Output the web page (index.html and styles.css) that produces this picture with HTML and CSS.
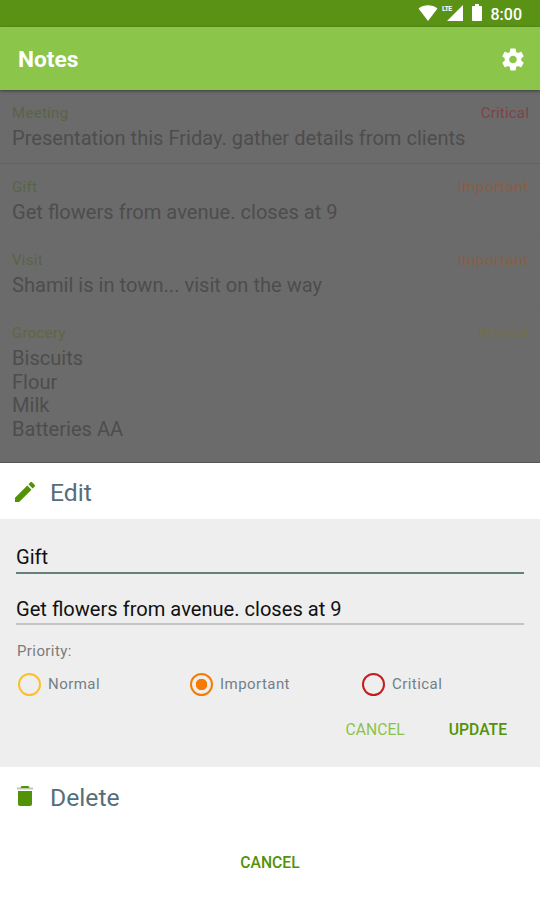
FILE: index.html
```html
<!DOCTYPE html>
<html lang="en">
<head>
<meta charset="utf-8">
<title>Notes</title>
<link rel="stylesheet" href="styles.css">
</head>
<body>
<div class="statusbar">
  <svg class="wifi" viewBox="0 0 20 16"><path d="M10 16 0.5 3.6C6-0.8 14-0.8 19.500 3.600Z"/></svg>
  <span class="lte">LTE</span>
  <svg class="signal" viewBox="0 0 16 16"><path d="M0 16 16 0V16Z"/></svg>
  <svg class="battery" viewBox="0 0 10 17"><path d="M3 0H7V2H9Q10 2 10 3V16Q10 17 9 17H1Q0 17 0 16V3Q0 2 1 2H3Z"/></svg>
  <span class="clock">8:00</span>
</div>
<header class="appbar">
  <h1>Notes</h1>
  <svg class="gear" viewBox="2 2 20 20"><path d="M19.430 12.980c.04-.32.07-.64.07-.98s-.03-.66-.07-.98l2.110-1.650c.19-.15.24-.42.12-.64l-2-3.460c-.12-.22-.39-.3-.61-.22l-2.490 1c-.52-.4-1.080-.73-1.690-.98l-.38-2.650C14.460 2.180 14.250 2 14 2h-4c-.25 0-.46.18-.49.42l-.38 2.650c-.61.25-1.170.59-1.690.98l-2.490-1c-.23-.09-.49 0-.61.22l-2 3.460c-.13.22-.07.49.12.64l2.110 1.650c-.04.32-.07.65-.07.98s.03.66.07.98l-2.110 1.650c-.19.15-.24.42-.12.64l2 3.460c.12.22.39.3.61.22l2.490-1c.52.4 1.080.73 1.690.98l.38 2.650c.03.24.24.42.49.42h4c.25 0 .46-.18.49-.42l.38-2.650c.61-.25 1.170-.59 1.690-.98l2.490 1c.23.09.49 0 .61-.22l2-3.460c.12-.22.07-.49-.12-.64l-2.110-1.650zM12 15.500c-1.930 0-3.500-1.570-3.500-3.500s1.570-3.500 3.500-3.500 3.500 1.570 3.500 3.500-1.570 3.500-3.500 3.500z"/></svg>
</header>
<main class="notes">
  <article class="note">
    <div class="meta"><span>Meeting</span><span class="critical">Critical</span></div>
    <p>Presentation this Friday. gather details from clients</p>
  </article>
  <article class="note">
    <div class="meta"><span>Gift</span><span class="important">Important</span></div>
    <p>Get flowers from avenue. closes at 9</p>
  </article>
  <article class="note">
    <div class="meta"><span>Visit</span><span class="important">Important</span></div>
    <p>Shamil is in town... visit on the way</p>
  </article>
  <article class="note">
    <div class="meta grocery"><span>Grocery</span><span class="normal">Normal</span></div>
    <p>Biscuits<br>Flour<br>Milk<br>Batteries AA</p>
  </article>
</main>
<section class="sheet">
  <div class="action edit">
    <svg class="pencil" viewBox="3 3 18 18"><path d="M3 17.250V21h3.750L17.810 9.940l-3.750-3.750L3 17.250zM20.710 7.040c.39-.39.39-1.020 0-1.410l-2.340-2.340c-.39-.39-1.020-.39-1.410 0l-1.830 1.830 3.750 3.750 1.830-1.830z"/></svg>
    <span>Edit</span>
  </div>
  <form class="form">
    <div class="field title">Gift</div>
    <div class="field body">Get flowers from avenue. closes at 9</div>
    <div class="label">Priority:</div>
    <div class="radios">
      <div class="radio"><i class="ring yellow"></i><span>Normal</span></div>
      <div class="radio"><i class="ring orange"></i><span>Important</span></div>
      <div class="radio"><i class="ring red"></i><span>Critical</span></div>
    </div>
    <div class="buttons"><span class="btn light">CANCEL</span><span class="btn">UPDATE</span></div>
  </form>
  <div class="action delete">
    <svg class="trash" viewBox="0 0 16 20"><path d="M1 5H15V18Q15 20 13 20H3Q1 20 1 18Z"/><path class="lid" d="M0 1.500H16V3.500H0Z"/><path d="M4.500 0H11.500L12.500 2H3.500Z"/></svg>
    <span>Delete</span>
  </div>
  <div class="dismiss"><span class="btn">CANCEL</span></div>
</section>
</body>
</html>
```
FILE: styles.css
```css
* { box-sizing: border-box; }
body {
  margin: 0;
  width: 540px;
  height: 900px;
  overflow: hidden;
  display: flex;
  flex-direction: column;
  font-family: Roboto, "Liberation Sans", sans-serif;
  background: #fff;
}
svg { display: block; fill: #fff; flex: none; }
.statusbar {
  height: 27px;
  flex: none;
  display: flex;
  align-items: flex-start;
  padding: 5px 18px 0 418px;
  background: #5a9216;
  color: #fff;
}
.wifi { width: 20px; height: 16px; }
.lte { width: 11px; margin: 1px -6px 0 4px; font-size: 7px; line-height: 7px; font-weight: 700; letter-spacing: -0.5px; }
.signal { width: 16px; height: 16px; margin-left: 0; }
.battery { width: 10px; height: 17px; margin: -1px 0 0 9px; }
.clock { margin-left: 9px; font-size: 16px; line-height: 19px; font-weight: 500; }
.appbar {
  height: 63px;
  flex: none;
  display: flex;
  align-items: center;
  justify-content: space-between;
  padding: 0 16px 2px 18px;
  background: #8bc54a;
  position: relative;
  box-shadow: 0 1px 3px rgba(0, 0, 0, .45);
}
h1 { margin: 4px 0 0; font-size: 22.700px; line-height: 28px; font-weight: 700; color: #fff; }
.gear { width: 22px; height: 23px; margin-top: 3px; }
.notes { height: 373px; flex: none; background: #6b6b6b; overflow: hidden; color: #4d4d4d; border-bottom: 1px solid #555; }
.note { height: 73px; padding: 14px 11px 0 12px; border-bottom: 1px solid #696969; }
.note:first-child { height: 74px; border-color: #626262; }
.note:last-child { height: 150px; border: 0; }
.meta { display: flex; justify-content: space-between; font-size: 15px; line-height: 19px; letter-spacing: .3px; color: #586447; }
.critical { color: #7d4348; letter-spacing: .2px; }
.important { color: #875f42; letter-spacing: .6px; }
.normal { color: #71704b; letter-spacing: .2px; }
.grocery { color: #62663f; }
.note p { margin: 4px 0 0; font-size: 20.100px; line-height: 23.700px; }
.sheet { flex: 1; background: #fff; }
.action { display: flex; align-items: center; font-size: 24.700px; line-height: 30px; color: #546e7a; }
.action svg { fill: #529207; }
.edit { height: 56px; padding: 3px 0 0 15px; }
.pencil { width: 20px; height: 20px; margin: 0 15px 2px 0; }
.form { height: 248px; background: #eee; padding: 24px 16px 0; }
.field { font-size: 20.100px; line-height: 28px; color: #111; }
.title { height: 31px; border-bottom: 2px solid #64807c; }
.body { height: 51px; padding-top: 21px; border-bottom: 2px solid #c3c3c3; }
.label { margin-top: 16px; padding-left: 1px; font-size: 15px; line-height: 20px; letter-spacing: .4px; color: #7b7b7b; }
.radios { display: grid; grid-template-columns: 172px 172px 1fr; margin: 11px 0 0 2px; }
.radio { display: flex; align-items: center; height: 24px; font-size: 15px; letter-spacing: .45px; color: #728088; }
.ring { width: 23px; height: 23px; margin-right: 7px; border: 2.500px solid #fbc02d; border-radius: 50%; }
.orange { border-color: #f57c00; background: radial-gradient(circle, #f57c00 5.500px, transparent 6px); }
.red { border-color: #c41c20; }
.buttons { display: flex; justify-content: flex-end; gap: 44px; margin: 24px 17px 0 0; }
.btn { font-size: 15.700px; line-height: 20px; font-weight: 500; color: #529207; }
.light { color: #8bc34a; font-weight: 400; }
.delete { height: 60px; padding: 2px 0 0 17px; }
.trash { width: 16px; height: 20px; margin: 0 17px 4px 0; }
.trash .lid { fill: #b9ceaa; }
.dismiss { display: flex; justify-content: center; padding-top: 26px; }
```
